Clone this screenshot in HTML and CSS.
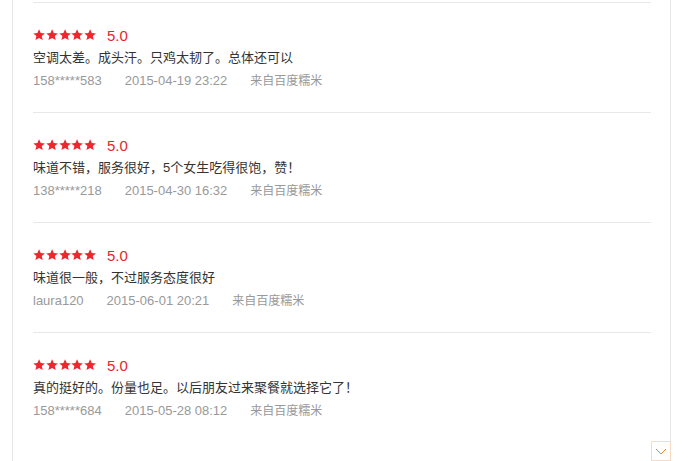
FILE: index.html
```html
<!DOCTYPE html>
<html lang="zh-CN">
<head>
  <meta charset="UTF-8" />
  <title>评价</title>
  <link rel="stylesheet" href="styles.css">
</head>
<body>
  <div class="panel">
    <ul class="reviews">
      <li class="review">
        <div class="score">
          <span class="stars">
            <svg viewBox="0 0 12 12"><path d="M6 0.3l1.65 3.75 4.05.3-3.05 2.65.95 3.95L6 8.85 2.4 10.95l.95-3.95L.3 4.35l4.05-.3z"/></svg>
            <svg viewBox="0 0 12 12"><path d="M6 0.3l1.65 3.75 4.05.3-3.05 2.65.95 3.95L6 8.85 2.4 10.95l.95-3.95L.3 4.35l4.05-.3z"/></svg>
            <svg viewBox="0 0 12 12"><path d="M6 0.3l1.65 3.75 4.05.3-3.05 2.65.95 3.95L6 8.85 2.4 10.95l.95-3.95L.3 4.35l4.05-.3z"/></svg>
            <svg viewBox="0 0 12 12"><path d="M6 0.3l1.65 3.75 4.05.3-3.05 2.65.95 3.95L6 8.85 2.4 10.95l.95-3.95L.3 4.35l4.05-.3z"/></svg>
            <svg viewBox="0 0 12 12"><path d="M6 0.3l1.65 3.75 4.05.3-3.05 2.65.95 3.95L6 8.85 2.4 10.95l.95-3.95L.3 4.35l4.05-.3z"/></svg>
          </span>
          <span class="num">5.0</span>
        </div>
        <p class="text">空调太差。成头汗。只鸡太韧了。总体还可以</p>
        <div class="meta"><span class="user">158*****583</span><span class="date">2015-04-19 23:22</span><span class="source">来自百度糯米</span></div>
      </li>
      <li class="review">
        <div class="score">
          <span class="stars">
            <svg viewBox="0 0 12 12"><path d="M6 0.3l1.65 3.75 4.05.3-3.05 2.65.95 3.95L6 8.85 2.4 10.95l.95-3.95L.3 4.35l4.05-.3z"/></svg>
            <svg viewBox="0 0 12 12"><path d="M6 0.3l1.65 3.75 4.05.3-3.05 2.65.95 3.95L6 8.85 2.4 10.95l.95-3.95L.3 4.35l4.05-.3z"/></svg>
            <svg viewBox="0 0 12 12"><path d="M6 0.3l1.65 3.75 4.05.3-3.05 2.65.95 3.95L6 8.85 2.4 10.95l.95-3.95L.3 4.35l4.05-.3z"/></svg>
            <svg viewBox="0 0 12 12"><path d="M6 0.3l1.65 3.75 4.05.3-3.05 2.65.95 3.95L6 8.85 2.4 10.95l.95-3.95L.3 4.35l4.05-.3z"/></svg>
            <svg viewBox="0 0 12 12"><path d="M6 0.3l1.65 3.75 4.05.3-3.05 2.65.95 3.95L6 8.85 2.4 10.95l.95-3.95L.3 4.35l4.05-.3z"/></svg>
          </span>
          <span class="num">5.0</span>
        </div>
        <p class="text">味道不错，服务很好，5个女生吃得很饱，赞！</p>
        <div class="meta"><span class="user">138*****218</span><span class="date">2015-04-30 16:32</span><span class="source">来自百度糯米</span></div>
      </li>
      <li class="review">
        <div class="score">
          <span class="stars">
            <svg viewBox="0 0 12 12"><path d="M6 0.3l1.65 3.75 4.05.3-3.05 2.65.95 3.95L6 8.85 2.4 10.95l.95-3.95L.3 4.35l4.05-.3z"/></svg>
            <svg viewBox="0 0 12 12"><path d="M6 0.3l1.65 3.75 4.05.3-3.05 2.65.95 3.95L6 8.85 2.4 10.95l.95-3.95L.3 4.35l4.05-.3z"/></svg>
            <svg viewBox="0 0 12 12"><path d="M6 0.3l1.65 3.75 4.05.3-3.05 2.65.95 3.95L6 8.85 2.4 10.95l.95-3.95L.3 4.35l4.05-.3z"/></svg>
            <svg viewBox="0 0 12 12"><path d="M6 0.3l1.65 3.75 4.05.3-3.05 2.65.95 3.95L6 8.85 2.4 10.95l.95-3.95L.3 4.35l4.05-.3z"/></svg>
            <svg viewBox="0 0 12 12"><path d="M6 0.3l1.65 3.75 4.05.3-3.05 2.65.95 3.95L6 8.85 2.4 10.95l.95-3.95L.3 4.35l4.05-.3z"/></svg>
          </span>
          <span class="num">5.0</span>
        </div>
        <p class="text">味道很一般，不过服务态度很好</p>
        <div class="meta"><span class="user">laura120</span><span class="date">2015-06-01 20:21</span><span class="source">来自百度糯米</span></div>
      </li>
      <li class="review">
        <div class="score">
          <span class="stars">
            <svg viewBox="0 0 12 12"><path d="M6 0.3l1.65 3.75 4.05.3-3.05 2.65.95 3.95L6 8.85 2.4 10.95l.95-3.95L.3 4.35l4.05-.3z"/></svg>
            <svg viewBox="0 0 12 12"><path d="M6 0.3l1.65 3.75 4.05.3-3.05 2.65.95 3.95L6 8.85 2.4 10.95l.95-3.95L.3 4.35l4.05-.3z"/></svg>
            <svg viewBox="0 0 12 12"><path d="M6 0.3l1.65 3.75 4.05.3-3.05 2.65.95 3.95L6 8.85 2.4 10.95l.95-3.95L.3 4.35l4.05-.3z"/></svg>
            <svg viewBox="0 0 12 12"><path d="M6 0.3l1.65 3.75 4.05.3-3.05 2.65.95 3.95L6 8.85 2.4 10.95l.95-3.95L.3 4.35l4.05-.3z"/></svg>
            <svg viewBox="0 0 12 12"><path d="M6 0.3l1.65 3.75 4.05.3-3.05 2.65.95 3.95L6 8.85 2.4 10.95l.95-3.95L.3 4.35l4.05-.3z"/></svg>
          </span>
          <span class="num">5.0</span>
        </div>
        <p class="text">真的挺好的。份量也足。以后朋友过来聚餐就选择它了！</p>
        <div class="meta"><span class="user">158*****684</span><span class="date">2015-05-28 08:12</span><span class="source">来自百度糯米</span></div>
      </li>
    </ul>
    <a class="more" href="#">
      <svg viewBox="0 0 18 18"><path d="M4 7l5 5 5-5" fill="none" stroke="#e0883a" stroke-width="1"/></svg>
    </a>
  </div>
</body>
</html>
```

FILE: styles.css
```css
body {
  margin: 0;
  padding: 0;
  background: #fff;
  font-family: "Liberation Sans", "Noto Sans CJK SC", sans-serif;
  overflow: hidden;
}
.panel {
  position: relative;
  margin-left: 12px;
  width: 618px;
  height: 100vh;
  padding: 0 19px 0 20px;
  border-left: 1px solid #e6e6e6;
  border-right: 1px solid #e6e6e6;
}
.reviews {
  list-style: none;
  margin: 0;
  padding: 2px 0 0;
}
.review {
  border-top: 1px solid #e8e8e8;
  padding: 22px 0 20px;
}
.score {
  display: flex;
  align-items: center;
  height: 20px;
}
.stars {
  display: flex;
  gap: 0.6px;
  width: 64px;
}
.stars svg {
  width: 12.2px;
  height: 12.2px;
  fill: #f0252d;
}
.num {
  margin-left: 10px;
  font-size: 15px;
  color: #e4262b;
}
.text {
  margin: 2px 0 0;
  font-size: 13px;
  line-height: 22px;
  color: #333;
}
.meta {
  margin-top: 1px;
  font-size: 13px;
  line-height: 22px;
  color: #999;
}
.user,
.date {
  margin-right: 23px;
}
.source {
  font-size: 12px;
}
.more {
  position: absolute;
  right: -1px;
  bottom: 0;
  width: 18px;
  height: 18px;
  border: 1px solid #f6dcc6;
  background: #fff;
  display: flex;
}
.more svg {
  width: 18px;
  height: 18px;
}
```
